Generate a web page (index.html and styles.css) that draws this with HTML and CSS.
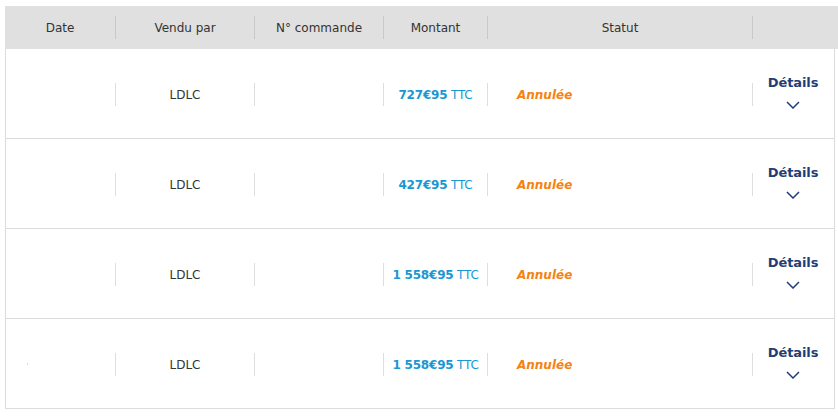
FILE: index.html
```html
<!DOCTYPE html>
<html lang="fr">
<head>
<meta charset="utf-8">
<link rel="stylesheet" href="styles.css">
</head>
<body>
<div class="orders">
  <div class="head">
    <div class="hc">Date</div>
    <div class="hc sep">Vendu par</div>
    <div class="hc sep">N° commande</div>
    <div class="hc sep">Montant</div>
    <div class="hc sep">Statut</div>
    <div class="hc sep"></div>
  </div>
  <div class="row">
    <div class="c"></div>
    <div class="c sep">LDLC</div>
    <div class="c sep"></div>
    <div class="c sep price"><b>727€95</b>&nbsp;TTC</div>
    <div class="c sep status">Annulée</div>
    <div class="c details"><span>Détails</span><svg width="14" height="8" viewBox="0 0 14 8"><path d="M1 1l6 6 6-6" fill="none" stroke="#1f3d78" stroke-width="1.5"/></svg></div>
  </div>
  <div class="row">
    <div class="c"></div>
    <div class="c sep">LDLC</div>
    <div class="c sep"></div>
    <div class="c sep price"><b>427€95</b>&nbsp;TTC</div>
    <div class="c sep status">Annulée</div>
    <div class="c details"><span>Détails</span><svg width="14" height="8" viewBox="0 0 14 8"><path d="M1 1l6 6 6-6" fill="none" stroke="#1f3d78" stroke-width="1.5"/></svg></div>
  </div>
  <div class="row">
    <div class="c"></div>
    <div class="c sep">LDLC</div>
    <div class="c sep"></div>
    <div class="c sep price"><b>1 558€95</b>&nbsp;TTC</div>
    <div class="c sep status">Annulée</div>
    <div class="c details"><span>Détails</span><svg width="14" height="8" viewBox="0 0 14 8"><path d="M1 1l6 6 6-6" fill="none" stroke="#1f3d78" stroke-width="1.5"/></svg></div>
  </div>
  <div class="row">
    <div class="c date"><i class="dot"></i></div>
    <div class="c sep">LDLC</div>
    <div class="c sep"></div>
    <div class="c sep price"><b>1 558€95</b>&nbsp;TTC</div>
    <div class="c sep status">Annulée</div>
    <div class="c details"><span>Détails</span><svg width="14" height="8" viewBox="0 0 14 8"><path d="M1 1l6 6 6-6" fill="none" stroke="#1f3d78" stroke-width="1.5"/></svg></div>
  </div>
</div>
</body>
</html>
```
FILE: styles.css
```css
* { box-sizing: border-box; }
body {
  margin: 0;
  padding: 6px 0 0 5px;
  background: #fff;
  font-family: "DejaVu Sans", sans-serif;
  font-size: 12px;
  color: #333;
}
.orders {
  width: 830px;
  border-left: 1px solid #dcdcdc;
  border-right: 1px solid #dcdcdc;
}
.head, .row {
  display: grid;
  grid-template-columns: 109px 139px 129px 104px 265px 82px;
}
.head {
  background: #e0e0e0;
  height: 43px;
  margin-left: -1px;
  margin-right: -4px;
  grid-template-columns: 110px 139px 129px 104px 265px 85px;
}
.row {
  height: 90px;
  padding-top: 2px;
  border-bottom: 1px solid #dcdcdc;
}
.hc, .c {
  align-self: center;
  height: 23px;
  display: flex;
  align-items: center;
  justify-content: center;
  white-space: nowrap;
}
.sep { border-left: 1px solid #c8c8c8; }
.c.sep { border-left-color: #dedede; }
.price { color: #1898d2; letter-spacing: -0.2px; }
.price b { font-weight: 700; }
.status {
  justify-content: flex-start;
  padding-left: 29px;
  color: #f5830f;
  font-weight: 700;
  font-style: italic;
}
.details {
  height: auto;
  flex-direction: column;
  gap: 11px;
  margin-bottom: 6px;
  position: relative;
}
.details::before {
  content: "";
  position: absolute;
  left: 0;
  top: 50%;
  margin-top: -9px;
  height: 23px;
  border-left: 1px solid #dedede;
}
.details span {
  color: #1f3d78;
  font-weight: 700;
  font-size: 13px;
  letter-spacing: -0.1px;
}
.details svg { display: block; }
.date { justify-content: flex-start; padding-left: 21px; }
.dot { display: block; width: 1px; height: 2px; background: #e8dcb0; margin-top: -1px; }
```
